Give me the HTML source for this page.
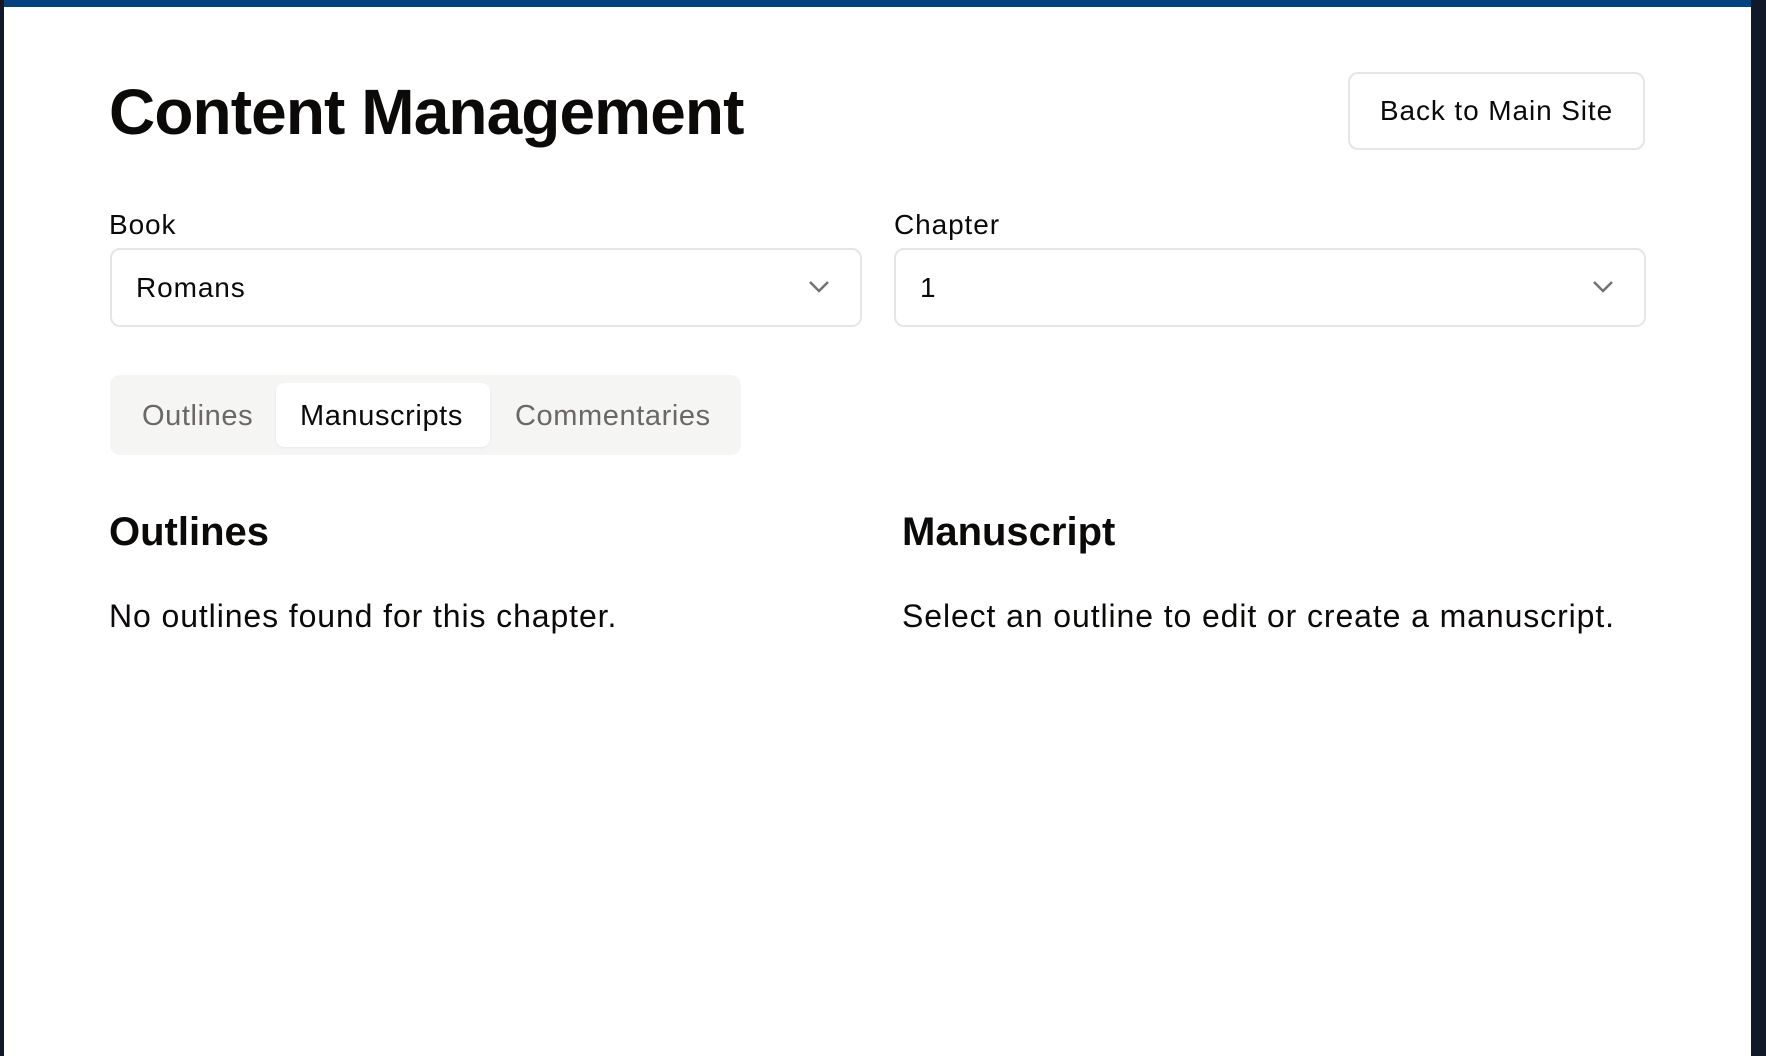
<!DOCTYPE html>
<html><head><meta charset="utf-8"><style>
*{margin:0;padding:0;box-sizing:border-box}
html,body{width:1766px;height:1056px;overflow:hidden;background:#111827;font-family:"Liberation Sans",sans-serif;color:#0c0a09}
.page{position:absolute;left:4px;top:0;width:1747px;height:1056px;background:#fff}
.bar{position:absolute;left:0;top:0;width:1747px;height:7px;background:#03417f}
.abs{position:absolute;white-space:nowrap}
h1{position:absolute;left:105px;top:72px;font-size:64px;font-weight:bold;letter-spacing:-0.9px;line-height:80px}
.btn{position:absolute;left:1344px;top:72px;width:297px;height:78px;border:2px solid #e5e5e5;border-radius:10px;font-size:28px;letter-spacing:0.9px;display:flex;align-items:center;justify-content:center}
.lbl{font-size:28px;line-height:30px;top:210px;letter-spacing:0.9px}
.sel{position:absolute;top:248px;width:752px;height:79px;border:2px solid #e5e5e5;border-radius:10px;font-size:28px;letter-spacing:0.9px;display:flex;align-items:center;padding-left:24px}
.sel svg{position:absolute;right:30px;top:30px}
.tabs{position:absolute;left:106px;top:375px;width:631px;height:80px;background:#f5f5f4;border-radius:10px}
.act{position:absolute;left:166px;top:8px;width:214px;height:64px;background:#fff;border-radius:8px;box-shadow:0 1px 2px rgba(0,0,0,.06)}
.tab{font-size:29px;top:400px;line-height:32px;color:#6b6764;letter-spacing:0.6px}
h2{position:absolute;font-size:40px;font-weight:bold;top:510px;line-height:44px}
.p{font-size:32px;top:598px;line-height:36px;letter-spacing:0.9px}
</style></head><body>
<div class="page">
<div class="bar"></div>
<h1>Content Management</h1>
<div class="btn">Back to Main Site</div>
<div class="abs lbl" style="left:105px">Book</div>
<div class="abs lbl" style="left:890px">Chapter</div>
<div class="sel" style="left:106px">Romans<svg width="22" height="14" viewBox="0 0 22 14"><path d="M2 2l9 9 9-9" fill="none" stroke="#737373" stroke-width="2.5"/></svg></div>
<div class="sel" style="left:890px">1<svg width="22" height="14" viewBox="0 0 22 14"><path d="M2 2l9 9 9-9" fill="none" stroke="#737373" stroke-width="2.5"/></svg></div>
<div class="tabs"><div class="act"></div></div>
<div class="abs tab" style="left:138px">Outlines</div>
<div class="abs tab" style="left:296px;color:#0c0a09">Manuscripts</div>
<div class="abs tab" style="left:511px">Commentaries</div>
<h2 style="left:105px">Outlines</h2>
<h2 style="left:898px">Manuscript</h2>
<div class="abs p" style="left:105px">No outlines found for this chapter.</div>
<div class="abs p" style="left:898px">Select an outline to edit or create a manuscript.</div>
</div>
</body></html>
